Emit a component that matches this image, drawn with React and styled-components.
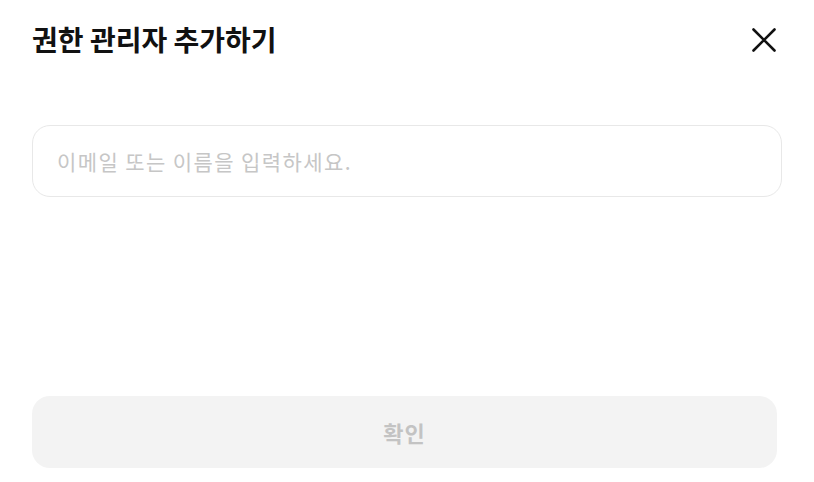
import React from "react";
import styled, { createGlobalStyle } from "styled-components";

const Global = createGlobalStyle`
  html, body { margin: 0; padding: 0; background: #fff; }
  body { font-family: "Noto Sans CJK KR", "Noto Sans", sans-serif; }
  * { box-sizing: border-box; }
`;

const Dialog = styled.div`
  width: 814px;
  height: 482px;
  padding: 0 32px 14px 32px;
  display: flex;
  flex-direction: column;
  background: #fff;
`;

const Header = styled.div`
  height: 80px;
  display: flex;
  align-items: center;
  justify-content: space-between;
`;

const Title = styled.h1`
  margin: 0;
  font-size: 28px;
  line-height: 1.2;
  font-weight: 700;
  color: #111;
  letter-spacing: 0;
`;

const CloseButton = styled.button`
  width: 30px;
  height: 30px;
  border: 0;
  background: none;
  padding: 0;
  margin-right: 3px;
  display: flex;
  align-items: center;
  justify-content: center;
  cursor: pointer;
`;

const Input = styled.input`
  margin-top: 45px;
  width: 750px;
  height: 72px;
  border: 1.5px solid #e8e8e8;
  border-radius: 18px;
  padding: 0 24px;
  font-family: inherit;
  font-size: 21px;
  letter-spacing: 1.4px;
  outline: none;
  &::placeholder { color: #c6c6c6; }
`;

const Spacer = styled.div`
  flex: 1;
`;

const Confirm = styled.button`
  width: 745px;
  height: 72px;
  border: 0;
  border-radius: 18px;
  background: #f3f3f3;
  color: #c3c3c3;
  font-family: inherit;
  font-size: 22px;
  font-weight: 700;
  letter-spacing: 1px;
`;

export default function App() {
  return (
    <>
      <Global />
      <Dialog>
        <Header>
          <Title>권한 관리자 추가하기</Title>
          <CloseButton aria-label="닫기">
            <svg width="26" height="26" viewBox="0 0 26 26">
              <path d="M2.5 2.5 L23.5 23.5 M23.5 2.5 L2.5 23.5" stroke="#111" strokeWidth="2.6" strokeLinecap="round" />
            </svg>
          </CloseButton>
        </Header>
        <Input placeholder="이메일 또는 이름을 입력하세요." />
        <Spacer />
        <Confirm disabled>확인</Confirm>
      </Dialog>
    </>
  );
}
